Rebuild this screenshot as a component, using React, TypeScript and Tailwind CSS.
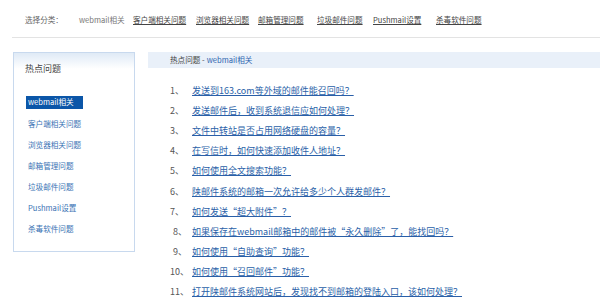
const font = { fontFamily: '"Noto Sans CJK SC", "Liberation Sans", sans-serif' };

const cats = [
  { t: "客户端相关问题", w: "w-[63px]" },
  { t: "浏览器相关问题", w: "w-[62px]" },
  { t: "邮箱管理问题", w: "w-[59px]" },
  { t: "垃圾邮件问题", w: "w-[56px]" },
  { t: "Pushmail设置", w: "w-[63px]" },
  { t: "杀毒软件问题", w: "w-[60px]" },
];

const side = ["客户端相关问题", "浏览器相关问题", "邮箱管理问题", "垃圾邮件问题", "Pushmail设置", "杀毒软件问题"];

const questions = [
  { n: "1、", pad: "pl-0", q: "发送到163.com等外域的邮件能召回吗？" },
  { n: "2、", pad: "pl-0", q: "发送邮件后，收到系统退信应如何处理？" },
  { n: "3、", pad: "pl-0", q: "文件中转站是否占用网络硬盘的容量？" },
  { n: "4、", pad: "pl-0", q: "在写信时，如何快速添加收件人地址？" },
  { n: "5、", pad: "pl-0", q: "如何使用全文搜索功能？" },
  { n: "6、", pad: "pl-0", q: "陕邮件系统的邮箱一次允许给多少个人群发邮件？" },
  { n: "7、", pad: "pl-0", q: "如何发送“超大附件”？" },
  { n: "8、", pad: "pl-[3px]", q: "如果保存在webmail邮箱中的邮件被“永久删除”了，能找回吗？" },
  { n: "9、", pad: "pl-[3px]", q: "如何使用“自助查询”功能？" },
  { n: "10、", pad: "pl-0", q: "如何使用“召回邮件”功能？" },
  { n: "11、", pad: "pl-0", q: "打开陕邮件系统网站后，发现找不到邮箱的登陆入口，该如何处理？" },
];

export default function App() {
  return (
    <div className="w-[600px] h-[300px] overflow-hidden bg-white" style={font}>
      {/* 分类导航 */}
      <div className="ml-[12px] h-[38px] border-b border-[#e3e3e3] flex items-center pl-[13px] pt-[3px] text-[7.6px]">
        <span className="text-[#666] w-[54px]">选择分类：</span>
        <span className="text-[#777] w-[54px]">webmail相关</span>
        <div className="flex">
          {cats.map((c) => (
            <div key={c.t} className={c.w}>
              <a className="text-[#444] underline">{c.t}</a>
            </div>
          ))}
        </div>
      </div>

      <div className="flex mt-[14px]">
        {/* 左侧栏 */}
        <div className="ml-[13px] w-[122px] h-[200px] border border-[#c8d9ee] bg-gradient-to-b from-[#dfeaf6] to-white to-[8%] shrink-0">
          <div className="pl-[11px] pt-[9px] text-[9px] text-[#444]">热点问题</div>
          <div className="mt-[20px] ml-[12px]">
            <div className="w-[57px] h-[13px] bg-[#0b56a8] text-white text-[7.6px] flex items-center pl-[2px] mb-[5px]">
              webmail相关
            </div>
            {side.map((s) => (
              <div key={s} className="h-[21px] flex items-center pl-[2px] text-[7.6px] text-[#3a73b4]">
                {s}
              </div>
            ))}
          </div>
        </div>

        {/* 右侧内容 */}
        <div className="ml-[13px] flex-1">
          <div className="h-[16px] bg-[#e9f0f9] flex items-center pl-[22px] text-[7.6px]">
            <span className="text-[#444]">热点问题 - </span>
            <span className="text-[#2f66b0] ml-[2px]">webmail相关</span>
          </div>
          <div className="mt-[12px] pl-[22px]">
            {questions.map((item) => (
              <div key={item.n} className="h-[20.2px] flex items-center text-[9px] leading-none">
                <span className={`w-[22px] text-[#555] ${item.pad}`}>{item.n}</span>
                <a className="text-[#2a5fa8] underline">{item.q}</a>
              </div>
            ))}
          </div>
        </div>
      </div>
    </div>
  );
}
